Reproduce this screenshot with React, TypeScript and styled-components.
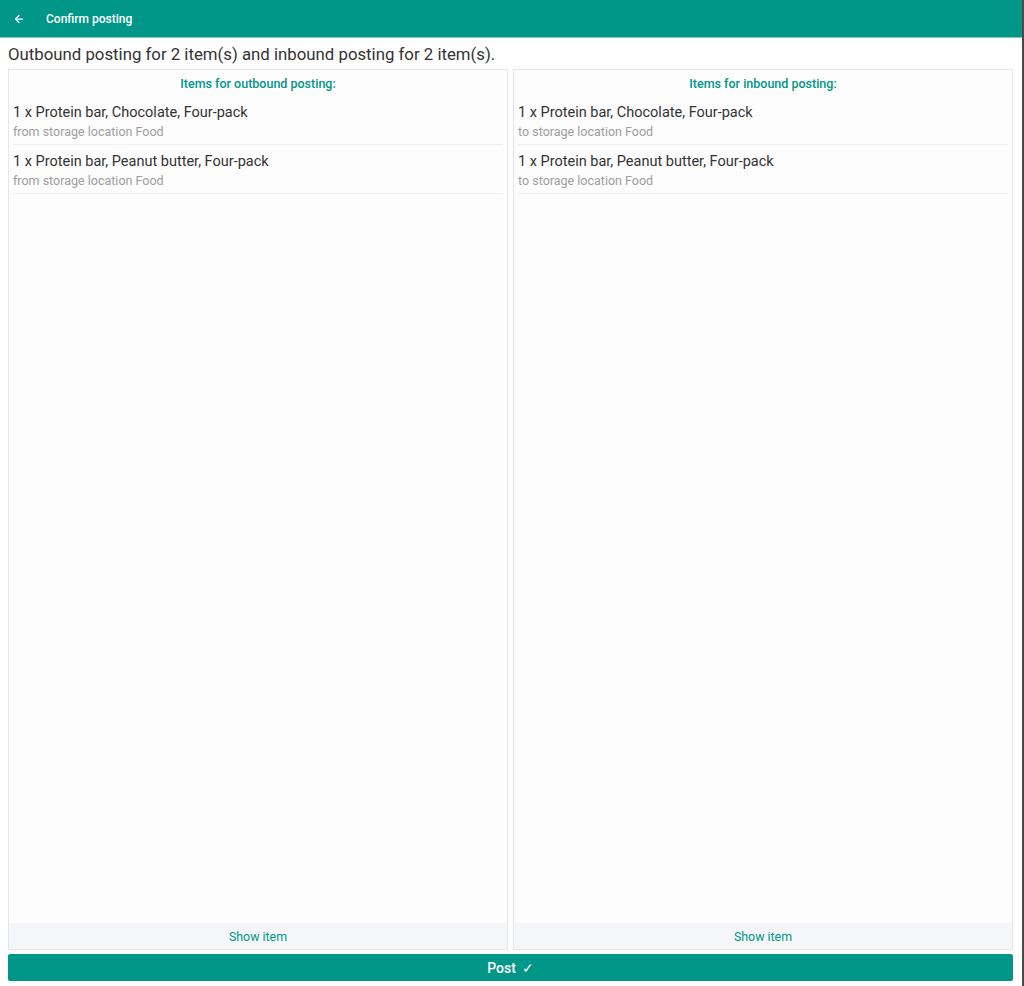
import React from 'react';
import styled, {createGlobalStyle} from 'styled-components';

const GlobalStyle = createGlobalStyle`
  html, body {
    margin: 0;
    padding: 0;
    background: #fff;
    font-family: Roboto, "Liberation Sans", Arial, sans-serif;
  }
  #root {
    height: 986px;
  }
`

const Screen = styled.div`
  display: flex;
  flex-direction: column;
  height: 986px;
  width: 1022px;
  border-right: 2px solid #4a4a4a;
  background: #fff;
`
const TopBar = styled.header`
  display: flex;
  align-items: center;
  height: 38px;
  flex-shrink: 0;
  background: #009688;
  border-bottom: 1px solid #7fcac3;
  color: #fff;
  padding: 0 0 0 13px;
  gap: 21px;
  box-sizing: border-box;
`
const BackButton = styled.span`
  display: flex;
  align-items: center;
  width: 12px;
  height: 12px;
`
const Title = styled.span`
  font-size: 12px;
  font-weight: 500;
`
const Summary = styled.div`
  font-size: 16.8px;
  line-height: 20px;
  color: #333;
  padding: 6px 8px 5px;
`
const Columns = styled.div`
  flex: 1;
  min-height: 0;
  display: grid;
  grid-template-columns: 1fr 1fr;
  gap: 5px;
  padding: 0 9px 0 8px;
`
const Panel = styled.section`
  display: flex;
  flex-direction: column;
  border: 1px solid #e6e6e6;
  background: #fdfdfd;
  min-height: 0;
`
const PanelTitle = styled.div`
  text-align: center;
  color: #009688;
  font-size: 12.5px;
  font-weight: 500;
  line-height: 25px;
  padding-top: 1px;
`
const ItemList = styled.div`
  flex: 1;
  padding: 0 4px;
`
const Item = styled.div`
  padding: 7px 0 4px;
  border-bottom: 1px solid #efefef;
`
const ItemName = styled.div`
  font-size: 14.5px;
  line-height: 19px;
  color: #333;
`
const ItemLocation = styled.div`
  font-size: 12.5px;
  line-height: 16px;
  margin-top: 2px;
  color: #9e9e9e;
`
const ShowItem = styled.div`
  background: #f5f6f9;
  text-align: center;
  color: #009688;
  font-size: 12.4px;
  line-height: 28px;
  height: 26px;
`
const PostButton = styled.button`
  display: flex;
  align-items: center;
  justify-content: center;
  gap: 6px;
  margin: 4px 9px 5px 8px;
  height: 27px;
  flex-shrink: 0;
  border: none;
  border-radius: 2px;
  background: #009688;
  color: #fff;
  font-family: inherit;
  font-size: 14px;
  font-weight: 500;
`

type Entry = {name: string}

const items: Entry[] = [
  {name: '1 x Protein bar, Chocolate, Four-pack'},
  {name: '1 x Protein bar, Peanut butter, Four-pack'},
]

const PostingPanel: React.FC<{title: string; prefix: string}> = ({title, prefix}) => (
  <Panel>
    <PanelTitle>{title}</PanelTitle>
    <ItemList>
      {items.map(item => (
        <Item key={item.name}>
          <ItemName>{item.name}</ItemName>
          <ItemLocation>{prefix} storage location Food</ItemLocation>
        </Item>
      ))}
    </ItemList>
    <ShowItem>Show item</ShowItem>
  </Panel>
)

const App: React.FC = () => {
  return (
    <Screen>
      <GlobalStyle/>
      <TopBar>
        <BackButton>
          <svg width="12" height="12" viewBox="0 0 24 24" fill="none" stroke="#fff" strokeWidth="2.5" strokeLinecap="round" strokeLinejoin="round">
            <path d="M19 12H5"/>
            <path d="M12 19l-7-7 7-7"/>
          </svg>
        </BackButton>
        <Title>Confirm posting</Title>
      </TopBar>
      <Summary>Outbound posting for 2 item(s) and inbound posting for 2 item(s).</Summary>
      <Columns>
        <PostingPanel title="Items for outbound posting:" prefix="from"/>
        <PostingPanel title="Items for inbound posting:" prefix="to"/>
      </Columns>
      <PostButton>Post <span>✓</span></PostButton>
    </Screen>
  )
}

export default App;
